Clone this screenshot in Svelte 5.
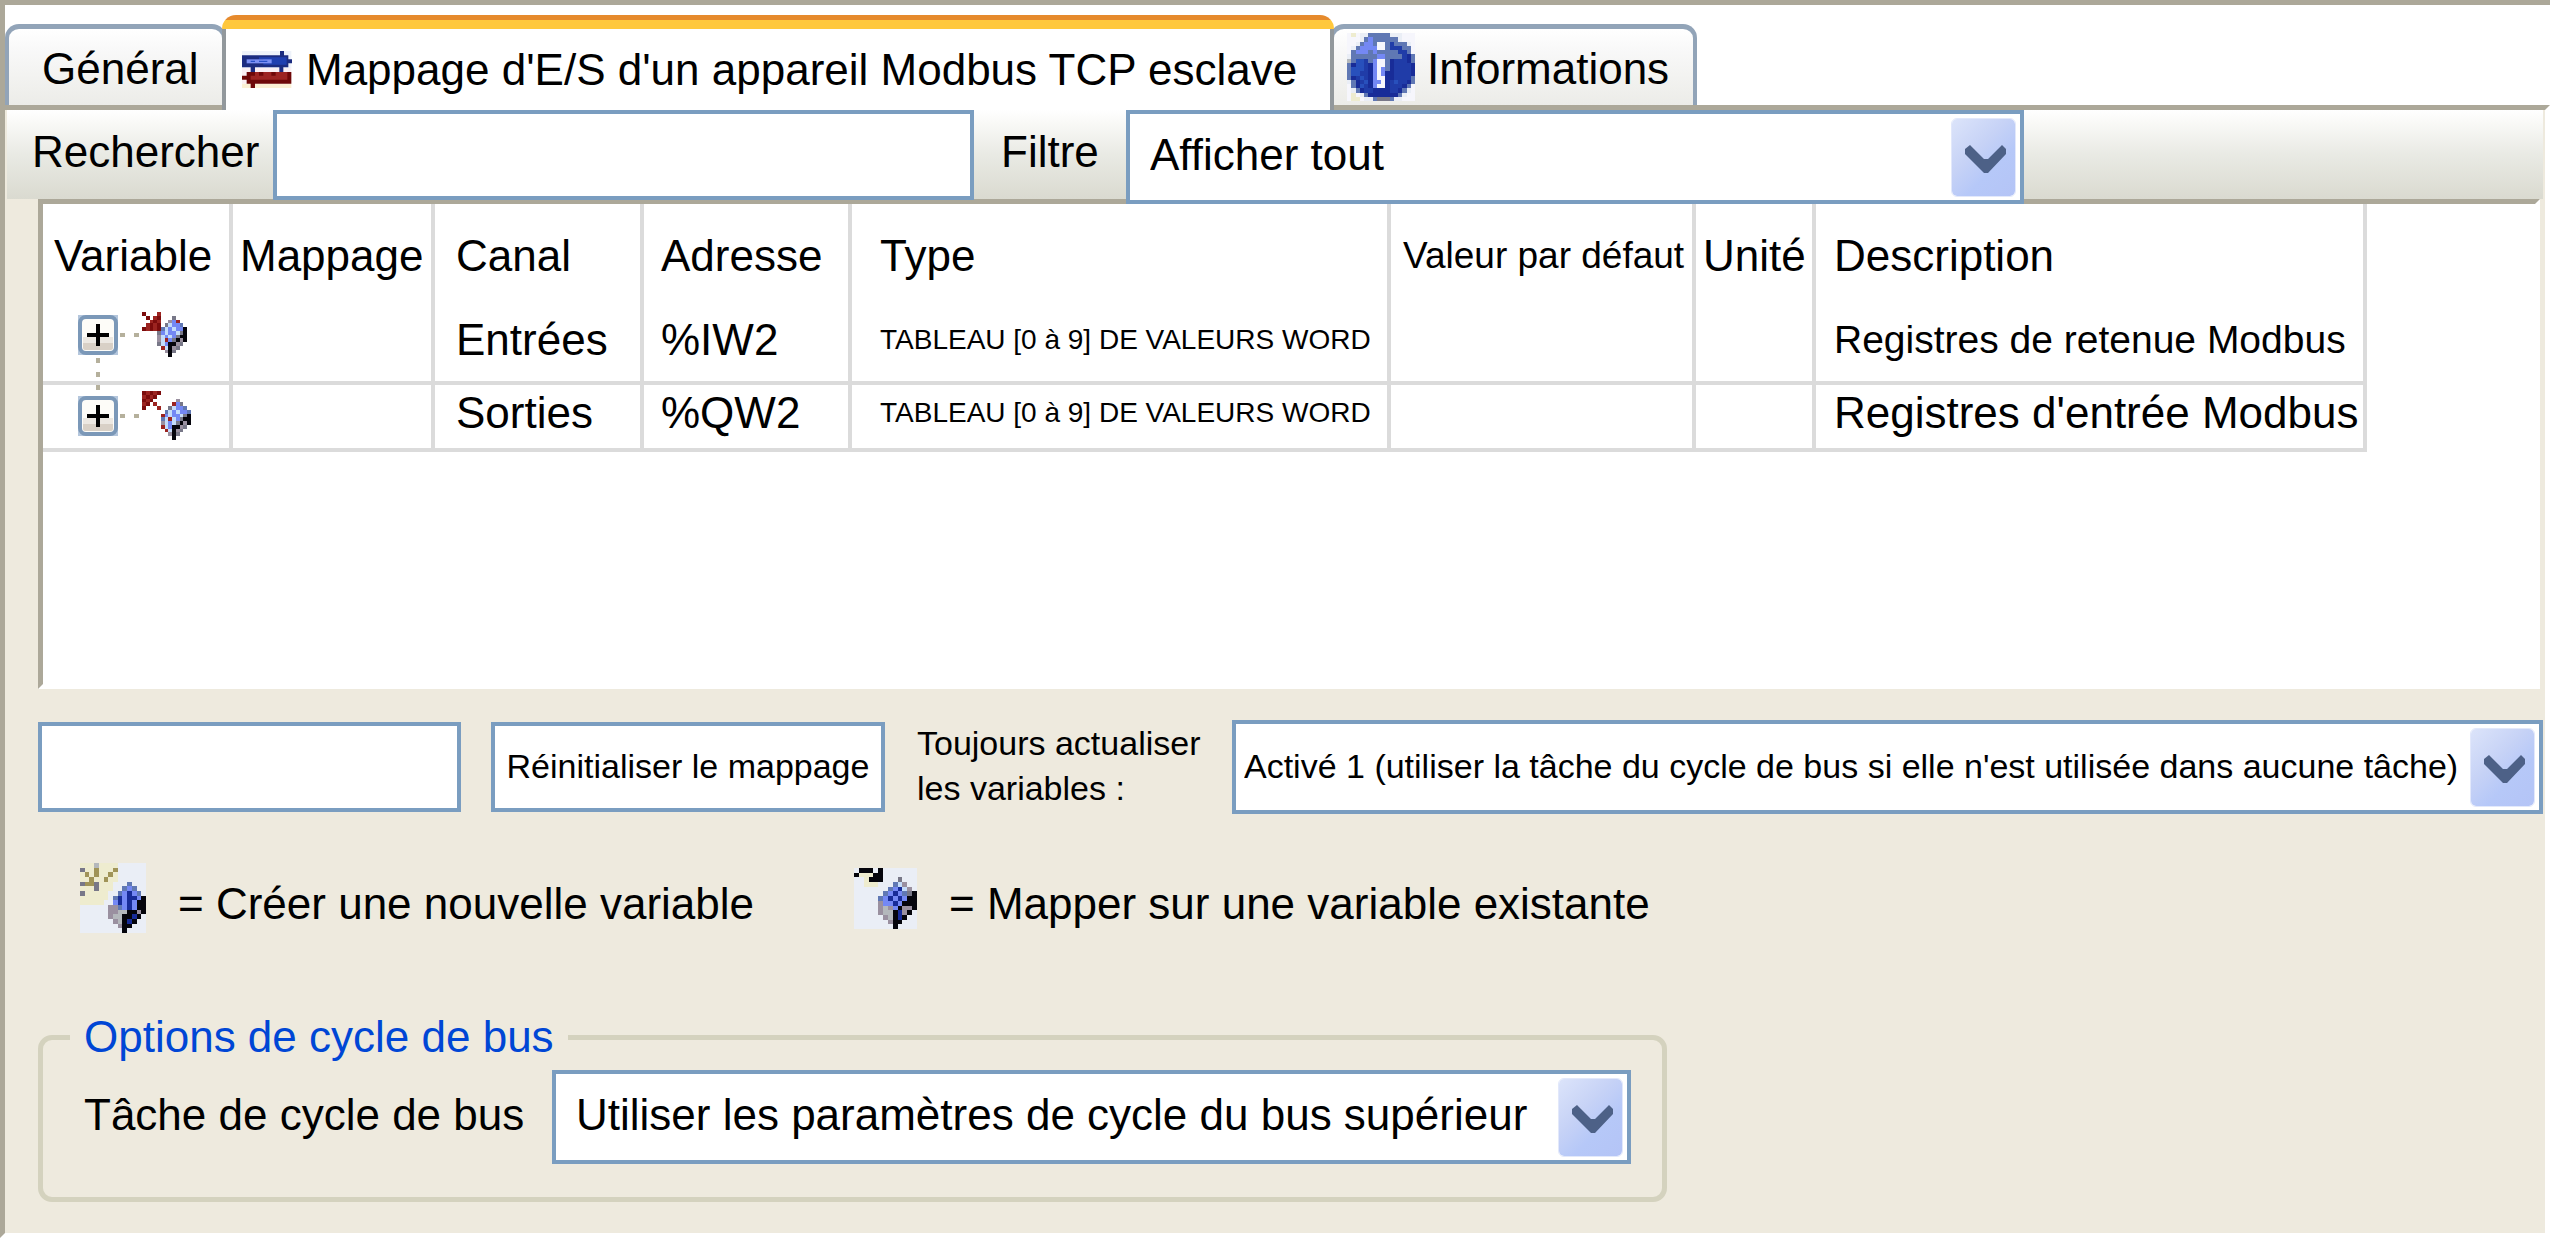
<script>
  const palette = {
    K: '#05050c', R: '#7c0c0c', r: '#9c2420', b: '#7488f4', l: '#c4dcfa', s: '#6078b4',
    g: '#787888', m: '#9a90a0', N: '#182c98', B: '#2850bc', i: '#203ca8',
    o: '#a09458', y: '#eeeccf', w: '#eaeef6', h: '#b4b8bc', W: '#f6f6fc'
  };

  const arts = {
    input: [
      'R...r.......', '.R.rR...g...', '..rRr..mbr..', '.rRrR.glbbs.', 'RrRrRslblbbK', '....gblbblgK',
      '....mlblbgKK', '....mlrbgKmK', '....glbKKmg.', '.....rlKmg..', '......mKg...', '.......K....'
    ],
    output: [
      'RrRrR........', 'rRrR.........', 'RrR......m...', 'rR.r....rbg..', 'R...r..glbbs.', '......slblbbs',
      '.....rblbblgK', '.....slrlbgKK', '.....mlblgKmK', '.....rlbKKmg.', '......rlKmg..', '.......mKg...', '........K....'
    ],
    create: [
      'yyyhyyyywwwwww', 'gyyoyyyowwwwww', 'yoyoyyoywwwwww', 'yyoyyoyywwwwww', 'googyyywwwswww', 'yyygyyywwsbsww',
      'gyyyyywwsbNbsw', 'yyyyyywsNbNNbK', 'yyyyywwbNbNbKK', 'wwwwwwmmsbNbKK', 'wwwwwwmmhhKKmK', 'wwwwwwmhhKKNKw',
      'wwwwwwwmhKNKww', 'wwwwwwwwmKKwww', 'wwwwwwwwwKwwww'
    ],
    map: [
      'wKKKwKwwwwwww', 'KyyyKKwwwwwww', 'wwyKKKwwwgwww', 'wwyyywwwslmww', 'wwwwwwwsbNlmw', 'wwwwwwsbNbsgK',
      'wwwwwsbNbNbKK', 'wwwwwmbbNbKKK', 'wwwwwmhmbKmmK', 'wwwwwmhhKNmKw', 'wwwwwwmhKNKww', 'wwwwwwwmKKwww', 'wwwwwwwwKwwww'
    ],
    info: [
      'WyWwwssssswwwWWW', 'WWWwsbsssssswWWW', 'WWwsbbsWWsissswW', 'WwsbbbbWWsiiissW', 'WsbbbsbsssssiisW', 'wssssssbbssssiNs',
      'hsBBisbWWsNiiiNs', 'sNBBiNbWWsNiiiiN', 'sBBBiNbWbsNiiiiN', 'sBBiiNbWbNNiiiiN', 'sNiBiNbWWNNiiiis', 'wsNiBNbbWNiBiiNs',
      'WsNBiNbWWNiiiNsW', 'WwsNiiNNNNiiNswW', 'WyWwsNNNNNNNswWW', 'WyyWwwsgggswwWWW'
    ]
  };

  const columns = [
    { key: 'variable', label: 'Variable' },
    { key: 'mapping', label: 'Mappage' },
    { key: 'channel', label: 'Canal' },
    { key: 'address', label: 'Adresse' },
    { key: 'type', label: 'Type' },
    { key: 'initial', label: 'Valeur par défaut' },
    { key: 'unit', label: 'Unité' },
    { key: 'description', label: 'Description' }
  ];

  const rows = [
    { icon: 'input', channel: 'Entrées', address: '%IW2', description: 'Registres de retenue Modbus', tight: true },
    { icon: 'output', channel: 'Sorties', address: '%QW2', description: "Registres d'entrée Modbus", tight: false }
  ];
</script>

{#snippet pixels(name, cls)}
  <svg class={cls} viewBox="0 0 {arts[name][0].length} {arts[name].length}" preserveAspectRatio="none" shape-rendering="crispEdges" aria-hidden="true">
    {#each arts[name] as line, y}
      {#each line.split('') as c, x}
        {#if palette[c]}<rect {x} {y} width="1" height="1" fill={palette[c]} />{/if}
      {/each}
    {/each}
  </svg>
{/snippet}

{#snippet dropdown(id, text, cls)}
  <div class="dropdown {cls}">
    <select {id}><option>{text}</option></select>
    <span class="arrow" aria-hidden="true">
      <svg viewBox="0 0 63 77">
        <path d="M13 30L18 26L32 40H36L50 26L54 30V35L36 54H32L13 35Z" fill="#4d6187" />
      </svg>
    </span>
  </div>
{/snippet}

<main>
  <div class="tabs" role="tablist">
    <button class="tab general" role="tab" aria-selected="false">Général</button>
    <button class="tab active" role="tab" aria-selected="true">
      <svg class="modbus" viewBox="36 33 150 111" preserveAspectRatio="none" aria-hidden="true">
        <path fill="#eef2fa" d="M36 33H184V84H36Z" />
        <path fill="#faf0f4" d="M36 84H184V131H36Z" />
        <path fill="#fbf0d4" d="M36 131H184V144H36Z" />
        <path fill="#1c2c80" d="M36 46H150V33H162V46H175V58H186V70H175V82H160V96H148V82H75V96H62V82H36Z" />
        <path fill="#2040b0" d="M87 52H170V74H100V58H87Z" />
        <path fill="#7c90f4" d="M50 58H125V70H50Z" />
        <path fill="#2850c8" d="M62 62H75V66H62ZM87 62H112V66H87Z" />
        <path fill="#6e0808" d="M50 96H184V131H75V144H62V131H50V119H36V107H50Z" />
        <path fill="#9c2422" d="M62 107H172V119H62ZM75 96H87V107H75ZM100 96H124V107H100ZM137 96H172V107H137Z" />
      </svg>
      <span>Mappage d'E/S d'un appareil Modbus TCP esclave</span>
    </button>
    <button class="tab infos" role="tab" aria-selected="false">
      {@render pixels('info', 'info-icon')}
      <span>Informations</span>
    </button>
  </div>

  <section class="panel" role="tabpanel">
    <div class="toolbar">
      <label class="search-label" for="search">Rechercher</label>
      <input id="search" class="field search" type="text" />
      <label class="filter-label" for="filter">Filtre</label>
      {@render dropdown('filter', 'Afficher tout', 'filter')}
    </div>

    <div class="grid">
      <table>
        <thead>
          <tr>
            {#each columns as col}
              <th class={col.key} scope="col">{col.label}</th>
            {/each}
          </tr>
        </thead>
        <tbody>
          {#each rows as row, i}
            <tr>
              <td class="variable">
                <div class="tree">
                  <button class="expand" aria-label="Développer {row.channel}">
                    <svg viewBox="0 0 40 40" aria-hidden="true">
                      <rect width="40" height="40" fill="#b4c6dc" />
                      <rect x="2" y="2" width="36" height="36" rx="6" fill="#fdfcf8" stroke="#7b98b8" stroke-width="4" />
                      <rect x="5" y="26" width="30" height="9" rx="2" fill="#d8d0c6" />
                      <rect x="5" y="22" width="30" height="6" fill="#ece8e2" />
                      <path d="M9 20H31M20 9V31" stroke="#000" stroke-width="4" />
                      {#if i < rows.length - 1}
                        <path d="M18 43h4v5h-4zM18 57h4v5h-4zM18 70h4v5h-4z" fill="#b5b09c" />
                      {/if}
                    </svg>
                  </button>
                  <svg class="link" viewBox="0 0 24 4" aria-hidden="true">
                    <path d="M2 0h5v4h-5zM16 0h5v4h-5z" fill="#b5b09c" />
                  </svg>
                  {@render pixels(row.icon, 'icon-' + row.icon)}
                </div>
              </td>
              <td class="mapping"></td>
              <td class="channel">{row.channel}</td>
              <td class="address">{row.address}</td>
              <td class="type">TABLEAU [0 à 9] DE VALEURS WORD</td>
              <td class="initial"></td>
              <td class="unit"></td>
              <td class="description" class:tight={row.tight}>{row.description}</td>
            </tr>
          {/each}
        </tbody>
      </table>
    </div>

    <div class="actions">
      <input class="field blank" type="text" aria-label="Mappage" />
      <button class="field reset">Réinitialiser le mappage</button>
      <label class="update-label" for="update">Toujours actualiser<br />les variables :</label>
      {@render dropdown('update', "Activé 1 (utiliser la tâche du cycle de bus si elle n'est utilisée dans aucune tâche)", 'update')}
    </div>

    <div class="key">
      <div class="key-item first">{@render pixels('create', 'icon-create')}<span>= Créer une nouvelle variable</span></div>
      <div class="key-item">{@render pixels('map', 'icon-map')}<span>= Mapper sur une variable existante</span></div>
    </div>

    <fieldset>
      <legend>Options de cycle de bus</legend>
      <div class="cycle">
        <label for="cycle">Tâche de cycle de bus</label>
        {@render dropdown('cycle', 'Utiliser les paramètres de cycle du bus supérieur', 'task')}
      </div>
    </fieldset>
  </section>
</main>

<style>
  :global(body) {
    margin: 0;
    background: #fff;
  }

  main,
  button,
  input,
  select {
    box-sizing: border-box;
    font-family: 'Liberation Sans', Arial, sans-serif;
    font-size: 44px;
    line-height: 50px;
    color: #000;
  }

  svg {
    display: block;
    flex: none;
  }

  .tabs {
    display: flex;
    align-items: flex-end;
    height: 105px;
    box-sizing: border-box;
    border-top: 5px solid #aca899;
    border-left: 5px solid #aca899;
  }

  .tab {
    display: flex;
    align-items: center;
    height: 81px;
    border: 4px solid #92a4b8;
    border-top-width: 5px;
    border-bottom: 0;
    border-radius: 14px 14px 0 0;
    background: linear-gradient(#fff, #f9f9f9 25%, #ecece8);
    white-space: nowrap;
  }

  .general {
    width: 221px;
    padding: 4px 0 0 33px;
  }

  .tab.active {
    position: relative;
    z-index: 1;
    width: 1112px;
    height: 95px;
    margin: 0 -4px -5px;
    padding: 0 0 0 16px;
    gap: 14px;
    border: 0;
    background:
      linear-gradient(#ffc83c, #ffc83c) 0 5px / 100% 9px no-repeat,
      linear-gradient(#e68a2c, #e68a2c) 0 0 / 100% 5px no-repeat,
      linear-gradient(#92989c, #92989c) 0 14px / 4px 100% no-repeat,
      linear-gradient(#92989c, #92989c) 100% 14px / 4px 100% no-repeat,
      #fff;
  }

  .infos {
    width: 367px;
    padding: 0 0 0 13px;
    gap: 12px;
  }

  .infos span {
    padding-top: 4px;
  }

  .active span {
    padding-top: 14px;
  }

  .modbus {
    width: 50px;
    height: 37px;
    margin-top: 14px;
    margin-left: 4px;
  }

  .info-icon {
    width: 68px;
    height: 68px;
  }

  .panel {
    box-sizing: border-box;
    border: 5px solid;
    border-color: #aca899 #fff #fff #aca899;
    background: #eeeade;
    padding-bottom: 31px;
  }

  .toolbar {
    display: flex;
    align-items: flex-start;
    height: 89px;
    margin: 0 2px;
    background: linear-gradient(#fff, #fafaf8 12%, #e9eae4 50%, #dadad0);
  }

  .toolbar label {
    padding-top: 17px;
  }

  .search-label {
    width: 239px;
    padding-left: 25px;
    margin-right: 2px;
  }

  .filter-label {
    width: 125px;
    padding-left: 27px;
  }

  .field {
    box-sizing: border-box;
    height: 90px;
    border: 4px solid #7a9dc0;
    border-radius: 0;
    background: #fff;
    margin: 0;
    padding: 0 12px;
  }

  .search {
    width: 701px;
    position: relative;
  }

  .dropdown {
    display: grid;
    align-items: center;
    position: relative;
  }

  .dropdown select {
    grid-area: 1 / 1;
    width: 100%;
    height: 94px;
    appearance: none;
    border: 4px solid #7a9dc0;
    border-radius: 0;
    background: #fff;
    margin: 0;
    padding: 0 80px 4px 20px;
  }

  .dropdown .arrow {
    grid-area: 1 / 1;
    justify-self: end;
    z-index: 1;
    width: 63px;
    height: 77px;
    margin-right: 9px;
    border-radius: 5px;
    background: linear-gradient(135deg, #dce4fa, #c6d2f6 40%, #b6c8f8 65%, #b4c4f6);
    outline: 1px solid #e2e8fb;
    pointer-events: none;
  }

  .filter {
    width: 898px;
  }

  .grid {
    box-sizing: border-box;
    min-height: 490px;
    margin: 0 5px 0 33px;
    border: 5px solid;
    border-color: #aca899 #fff #fff #aca899;
    background: #fff;
  }

  table {
    width: 2324px;
    table-layout: fixed;
    border-collapse: separate;
    border-spacing: 0;
  }

  th,
  td {
    box-sizing: border-box;
    padding: 0;
    border-right: 4px solid #dbdbdb;
    text-align: left;
    font-weight: 400;
    white-space: nowrap;
  }

  th {
    height: 95px;
    padding-top: 8px;
  }

  td {
    height: 67px;
    padding-bottom: 8px;
    border-bottom: 4px solid #dbdbdb;
  }

  tbody tr:first-child td {
    height: 86px;
    padding-bottom: 0;
  }

  .variable { width: 190px; padding-left: 11px; }
  .mapping { width: 202px; padding-left: 7px; }
  .channel { width: 209px; padding-left: 21px; }
  .address { width: 208px; padding-left: 17px; }
  .type { width: 539px; padding-left: 28px; }
  .initial { width: 305px; padding-left: 12px; }
  .unit { width: 120px; padding-left: 7px; }
  .description { width: 551px; padding-left: 18px; }

  th.initial {
    font-size: 37px;
  }

  td.type {
    font-size: 28px;
  }

  td.tight {
    font-size: 39px;
  }

  td.variable {
    padding-bottom: 2px;
  }

  .tree {
    display: flex;
    align-items: center;
    height: 50px;
    padding-left: 24px;
  }

  tbody tr:first-child .tree {
    margin-top: -11px;
  }

  .expand {
    width: 40px;
    height: 40px;
    padding: 0;
    border: 0;
    background: none;
  }

  .expand svg {
    width: 40px;
    height: 40px;
    overflow: visible;
  }

  .link {
    width: 24px;
    height: 4px;
  }

  .icon-input {
    width: 45px;
    height: 45px;
  }

  .icon-output {
    width: 49px;
    height: 49px;
  }

  .actions {
    display: flex;
    align-items: center;
    margin: 31px 2px 0 33px;
  }

  .blank {
    width: 423px;
    margin-right: 30px;
  }

  .reset,
  .update-label,
  .update select {
    font-size: 34px;
    line-height: 45px;
  }

  .reset {
    width: 394px;
    padding: 0 0 2px;
    white-space: nowrap;
  }

  .update-label {
    box-sizing: border-box;
    flex: none;
    width: 347px;
    padding: 0 0 2px 32px;
  }

  .update {
    flex: 1;
    min-width: 0;
  }

  .update select {
    padding: 0 80px 2px 8px;
  }

  .key {
    display: flex;
    align-items: center;
    margin-top: 49px;
    padding-left: 75px;
  }

  .key-item {
    display: flex;
    align-items: center;
    gap: 32px;
  }

  .key-item span {
    padding-top: 12px;
  }

  .first {
    width: 774px;
  }

  .icon-create {
    width: 66px;
    height: 70px;
  }

  .icon-map {
    width: 63px;
    height: 61px;
  }

  fieldset {
    box-sizing: border-box;
    max-width: 1629px;
    margin: 79px 33px 0;
    padding: 8px 31px 33px 27px;
    border: 5px solid #d4d2be;
    border-radius: 14px;
    min-width: 0;
  }

  legend {
    padding: 0 14px;
    color: #0046d5;
  }

  .cycle {
    display: flex;
    align-items: center;
    padding-left: 14px;
  }

  .cycle label {
    width: 468px;
    padding-bottom: 4px;
  }

  .task {
    flex: 1;
  }
</style>
